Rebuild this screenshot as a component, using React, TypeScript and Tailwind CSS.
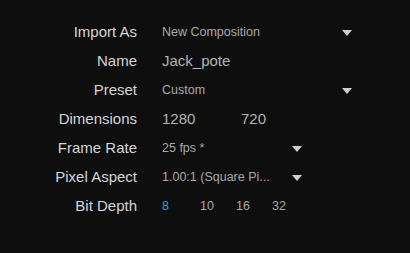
import { ReactNode } from "react";

function Arrow() {
  return (
    <svg width="10" height="6" viewBox="0 0 10 6" className="shrink-0">
      <path d="M0 0 H10 L5 6 Z" fill="#cfcfcf" />
    </svg>
  );
}

function Row({ label, children }: { label: string; children: ReactNode }) {
  return (
    <div className="flex items-center h-[29px]">
      <div className="w-[137px] text-right text-[15px] text-[#d6d6d6]">{label}</div>
      <div className="ml-[25px] flex items-center">{children}</div>
    </div>
  );
}

function Select({ value, width }: { value: string; width: string }) {
  return (
    <div className={`flex items-center justify-between pr-[3px] text-[12.5px] text-[#a9a9a9] ${width}`}>
      <span>{value}</span>
      <Arrow />
    </div>
  );
}

export default function App() {
  return (
    <div
      className="w-[410px] h-[253px] bg-[#0e0e0e] pt-[18px] overflow-hidden"
      style={{ fontFamily: '"Liberation Sans", Arial, sans-serif' }}
    >
      <Row label="Import As">
        <Select value="New Composition" width="w-[193px]" />
      </Row>
      <Row label="Name">
        <span className="text-[15px] text-[#b4b4b4]">Jack_pote</span>
      </Row>
      <Row label="Preset">
        <Select value="Custom" width="w-[193px]" />
      </Row>
      <Row label="Dimensions">
        <span className="w-[79px] text-[15px] text-[#b4b4b4]">1280</span>
        <span className="text-[15px] text-[#b4b4b4]">720</span>
      </Row>
      <Row label="Frame Rate">
        <Select value="25 fps *" width="w-[143px]" />
      </Row>
      <Row label="Pixel Aspect">
        <Select value="1.00:1 (Square Pi..." width="w-[143px]" />
      </Row>
      <Row label="Bit Depth">
        <div className="flex text-[12.5px] text-[#a9a9a9]">
          <span className="w-[38px] text-[#2f9fd4]">8</span>
          <span className="w-[36px]">10</span>
          <span className="w-[36px]">16</span>
          <span>32</span>
        </div>
      </Row>
    </div>
  );
}
